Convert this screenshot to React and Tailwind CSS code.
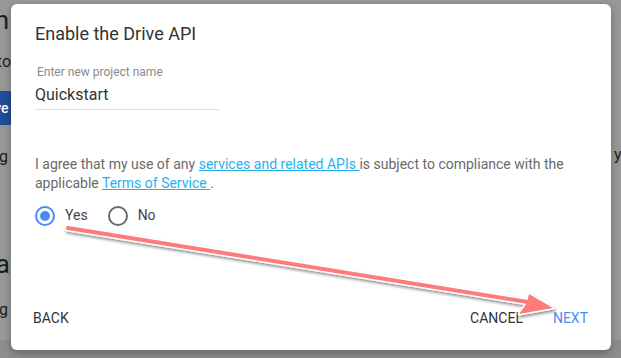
import React from "react";

const Radio = ({ checked, label }) => (
  <label className="flex items-center gap-[10px]">
    <span
      className={
        "flex h-[20px] w-[20px] items-center justify-center rounded-full border-2 " +
        (checked ? "border-[#4a8af4]" : "border-[#6b6b6b]")
      }
    >
      {checked && <span className="h-[10px] w-[10px] rounded-full bg-[#4a8af4]" />}
    </span>
    <span className="text-[14px] text-[#444]">{label}</span>
  </label>
);

const Arrow = () => (
  <svg className="pointer-events-none absolute left-0 top-0" width="621" height="358" viewBox="0 0 621 358">
    <defs>
      <filter id="sh" x="-10%" y="-50%" width="120%" height="200%">
        <feDropShadow dx="1" dy="2" stdDeviation="1.6" floodColor="#000" floodOpacity="0.45" />
      </filter>
    </defs>
    <g filter="url(#sh)">
      <line x1="68" y1="228" x2="528" y2="302" stroke="#fff" strokeWidth="7" strokeLinecap="round" />
      <polygon points="553,308 529,294 527,303 519,314" fill="#fff" stroke="#fff" strokeWidth="3" strokeLinejoin="round" />
      <line x1="68" y1="228" x2="528" y2="302" stroke="#ff7a7a" strokeWidth="4" strokeLinecap="round" />
      <polygon points="553,308 529,294 527,303 519,314" fill="#ff7a7a" />
    </g>
  </svg>
);

export default function App() {
  return (
    <div
      className="relative h-[358px] w-[621px] overflow-hidden bg-[#999]"
      style={{ fontFamily: "Roboto, 'Liberation Sans', sans-serif" }}
    >
      {/* page behind the dialog */}
      <div className="flex h-[340px] flex-col text-[#1c1c1c]">
        <div className="flex h-[40px] w-[9px] items-center justify-end whitespace-nowrap text-[26px]">Quickstart guide in</div>
        <div className="mt-[10px] flex w-[15px] justify-end whitespace-nowrap text-[16px]">Complete the steps to&nbsp;</div>
        <div className="mt-[17px] flex h-[34px] w-[12px] items-center justify-end whitespace-nowrap bg-[#1f4e9a] text-[14px] font-medium text-white">
          Save&nbsp;
        </div>
        <div className="mt-[20px] flex w-[8px] justify-end whitespace-nowrap text-[16px]">using</div>
        <div className="mt-[76px] flex w-[10px] justify-end whitespace-nowrap text-[26px]">Step 2: Insta</div>
        <div className="mt-[14px] flex w-[8px] justify-end whitespace-nowrap text-[16px]">Running</div>
      </div>
      <div className="h-[18px] bg-[#8e8e8e]" />
      <div className="absolute left-[614px] top-[143px] whitespace-nowrap text-[16px] text-[#1c1c1c]">you</div>

      {/* dialog */}
      <div className="absolute left-[11px] top-[4px] flex h-[346px] w-[600px] flex-col rounded-[6px] bg-white px-[24px] pt-[18px] shadow-[0_3px_10px_rgba(0,0,0,0.3)]">
        <h2 className="text-[18px] leading-[24px] text-[#333]">Enable the Drive API</h2>
        <div className="mt-[18px] w-[185px] border-b border-[#e0e0e0] pb-[3px]">
          <div className="pl-[2px] text-[12px] leading-[16px] text-[#8a8a8a]">Enter new project name</div>
          <div className="mt-[4px] text-[16px] leading-[22px] text-[#333]">Quickstart</div>
        </div>
        <p className="mt-[45px] text-[14px] leading-[19px] text-[#6a6a6a]">
          I agree that my use of any{" "}
          <a className="text-[#2ab0f0] underline">services and related APIs </a>is subject to compliance with the
          applicable <a className="text-[#2ab0f0] underline">Terms of Service </a> .
        </p>
        <div className="mt-[12px] flex items-center gap-[20px]">
          <Radio checked label="Yes" />
          <Radio label="No" />
        </div>
        <div className="mt-auto flex items-center pb-[21px] text-[14px] uppercase">
          <span className="-ml-[2px] text-[#333]">Back</span>
          <span className="ml-auto text-[#333]">Cancel</span>
          <span className="ml-[30px] mr-[-1px] text-[#4a8af4]">Next</span>
        </div>
      </div>

      <Arrow />
    </div>
  );
}
